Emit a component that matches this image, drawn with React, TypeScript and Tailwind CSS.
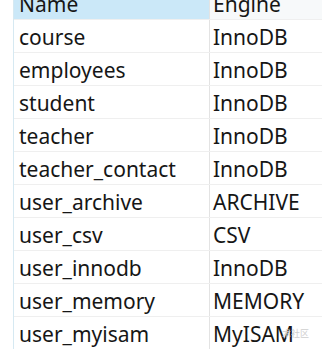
import React from "react";

const rows = [
  ["course", "InnoDB"],
  ["employees", "InnoDB"],
  ["student", "InnoDB"],
  ["teacher", "InnoDB"],
  ["teacher_contact", "InnoDB"],
  ["user_archive", "ARCHIVE"],
  ["user_csv", "CSV"],
  ["user_innodb", "InnoDB"],
  ["user_memory", "MEMORY"],
  ["user_myisam", "MyISAM"],
];

const App = () => {
  return (
    <div
      className="relative w-[322px] h-[350px] overflow-hidden bg-white text-[#161616]"
      style={{ fontFamily: '"Noto Sans", "Open Sans", sans-serif' }}
    >
      <div className="flex">
        <div className="w-[13px] shrink-0 bg-white" />
        <div className="flex-1 border-l border-[#d6e9f2]">
          <div className="flex h-[19px] overflow-hidden text-[21px] leading-[21px]">
            <div className="w-[196px] shrink-0 bg-[#cbe8f8] pl-[5px] border-r border-[#e3e3e3]">
              <div className="-mt-[6px]">Name</div>
            </div>
            <div className="flex-1 bg-[#f7f9fa] pl-[3px]">
              <div className="-mt-[6px]">Engine</div>
            </div>
          </div>
          {rows.map(([name, engine]) => (
            <div
              key={name}
              className="flex h-[33px] border-t border-[#efefef] text-[21px] leading-[32px]"
            >
              <div className="w-[196px] shrink-0 pl-[5px] pt-[1px] border-r border-[#e3e3e3]">
                {name}
              </div>
              <div className="flex-1 pl-[3px] pt-[1px]">{engine}</div>
            </div>
          ))}
        </div>
      </div>
      <div
        className="absolute left-[282px] top-[329px] text-[9px] leading-[10px] text-[#cfcfcf]"
        style={{ fontFamily: '"Noto Sans CJK SC", sans-serif' }}
      >
        术社区
      </div>
    </div>
  );
};

export default App;
